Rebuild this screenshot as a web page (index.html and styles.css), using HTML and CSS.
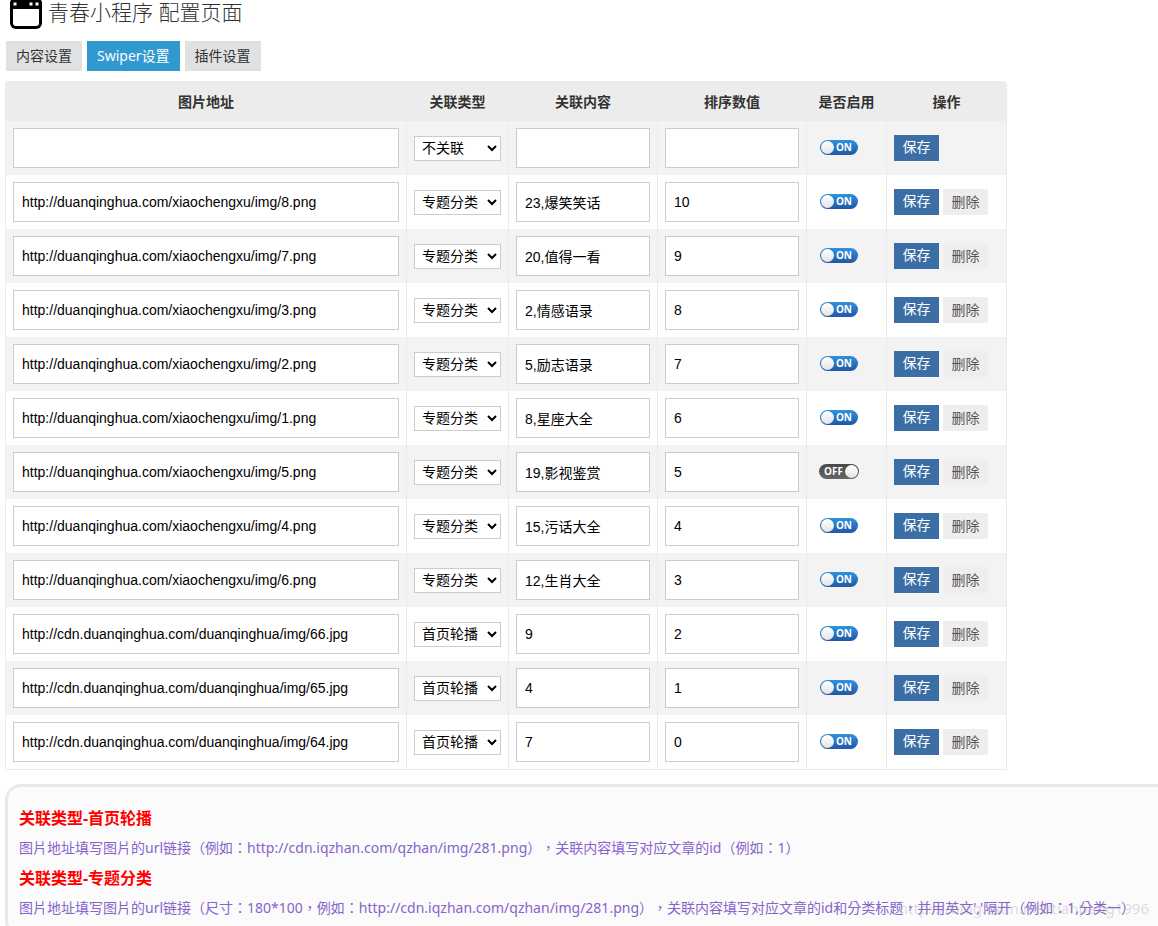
FILE: index.html
```html
<!DOCTYPE html>
<html lang="zh-CN">
<head>
<meta charset="utf-8">
<title>青春小程序 配置页面</title>
<link rel="stylesheet" href="styles.css">
</head>
<body>
<header class="page-head">
<svg class="logo" viewBox="0 0 32 29" aria-hidden="true"><path d="M1 0h30l1 2v21a6 6 0 0 1-6 6H6a6 6 0 0 1-6-6V2z"/><path class="logo-pane" d="M3 9h26v14a3 3 0 0 1-3 3H6a3 3 0 0 1-3-3z"/><path class="logo-pane" d="M3.500 2.500h3v3h-3zM19.500 2.500h3v3h-3zM25.500 2.500h3v3h-3z"/></svg>
<h1 class="title">青春小程序 配置页面</h1>
</header>
<nav class="tabs">
<a class="tab" href="#content">内容设置</a>
<a class="tab tab-active" href="#swiper">Swiper设置</a>
<a class="tab" href="#plugin">插件设置</a>
</nav>
<table class="grid">
<colgroup><col class="col-url"><col class="col-type"><col class="col-text"><col class="col-text"><col class="col-on"><col class="col-act"></colgroup>
<thead><tr><th>图片地址</th><th>关联类型</th><th>关联内容</th><th>排序数值</th><th>是否启用</th><th>操作</th></tr></thead>
<tbody id="rows"></tbody>
</table>
<section class="note">
<h2 class="note-title">关联类型-首页轮播</h2>
<p class="note-text">图片地址填写图片的url链接（例如：http://cdn.iqzhan.com/qzhan/img/281.png），关联内容填写对应文章的id（例如：1）</p>
<h2 class="note-title">关联类型-专题分类</h2>
<p class="note-text">图片地址填写图片的url链接（尺寸：180*100，例如：http://cdn.iqzhan.com/qzhan/img/281.png），关联内容填写对应文章的id和分类标题，并用英文','隔开（例如：1,分类一）</p>
</section>
<div class="watermark">https://blog.csdn.net/tianpang1996</div>
<script src="rows.js"></script>
</body>
</html>
```
FILE: styles.css
```css
* { box-sizing: border-box; }
body {
  margin: 0;
  padding: 0 0 20px 5px;
  overflow-x: hidden;
  background: #fff;
  color: #333;
  font: 14px/20px "Noto Sans", "Noto Sans CJK SC", sans-serif;
}
.page-head { display: flex; align-items: flex-start; gap: 6px; height: 41px; padding-left: 5px; }
.logo { width: 32px; height: 29px; flex: none; }
.logo-pane { fill: #fff; }
.title { margin: 0; font-size: 21px; line-height: 24px; font-weight: 300; }
.tabs { display: flex; gap: 5px; padding-left: 1px; margin-bottom: 10px; }
.tab { padding: 5px 10px; background: #dfe1e2; color: #333; text-decoration: none; }
.tab-active { background: #3199cf; color: #fff; }
.grid {
  width: 1002px;
  max-width: 100%;
  table-layout: fixed;
  border-collapse: separate;
  border-spacing: 0;
  border: solid #ebebeb;
  border-width: 0 1px 1px 0;
  border-radius: 4px 4px 2px 2px;
  overflow: hidden;
}
.col-url { width: 401px; }
.col-type { width: 102px; }
.col-text { width: 149px; }
.col-on { width: 80px; }
.col-act { width: 120px; }
.grid th { height: 40px; padding: 2px 0 0; background: #ececec; font-weight: 700; border-left: 1px solid #ebebeb; }
.grid td { height: 54px; padding: 7px; border-left: 1px solid #ebebeb; vertical-align: middle; }
.grid tbody tr:nth-child(odd) { background: #f3f3f3; }
.field {
  display: block;
  width: 100%;
  height: 40px;
  padding: 0 8px;
  border: 1px solid #ccc;
  border-radius: 0;
  background: #fff;
  color: #000;
  font: 14px "Liberation Sans", "Noto Sans CJK SC", sans-serif;
}
.pick {
  display: block;
  width: 100%;
  height: 25px;
  padding: 0 0 0 3px;
  border: 1px solid #ccc;
  border-radius: 0;
  background: #fff;
  color: #000;
  font: 14px "Liberation Sans", "Noto Sans CJK SC", sans-serif;
}
.switch {
  appearance: none;
  display: flex;
  align-items: center;
  justify-content: space-between;
  width: 38px;
  height: 15px;
  margin: 0 0 2px 6px;
  padding: 0 6px 0 1px;
  border-radius: 8px;
  background: linear-gradient(#3092dc, #2257a8);
  color: #fff;
  font: 700 10px/15px "Open Sans", sans-serif;
}
.switch::before { content: ""; width: 13px; height: 13px; border-radius: 50%; background: linear-gradient(#fff, #e4e4e4); }
.switch::after { content: "ON"; }
.switch:not(:checked) { flex-direction: row-reverse; width: 40px; margin-left: 5px; padding: 0 1px 0 5px; background: linear-gradient(#484848, #666); }
.switch:not(:checked)::after { content: "OFF"; }
.actions { display: flex; gap: 4px; }
.btn { width: 45px; height: 26px; padding: 0 0 2px; border: 0; background: #3a6ea5; color: #fff; font: inherit; }
.btn-plain { padding: 0; background: #eee; color: #555; }
.note {
  margin-top: 14px;
  padding: 19px 0 8px 11px;
  border: 3px solid #ede8e8;
  border-right: 0;
  border-radius: 16px 0 0 16px;
  background: #fbfbfb;
  white-space: nowrap;
}
.note-title { margin: 0; color: #f00; font-size: 16px; line-height: 24px; font-weight: 700; }
/* Centred full-width punctuation, each mark keeping its full em */
.note-text {
  margin: 0;
  padding: 6px 0;
  color: #8664cb;
  font-family: "Noto Sans", "Noto Sans CJK TC", sans-serif;
  font-feature-settings: "locl" 0;
  text-spacing-trim: space-all;
  line-height: 24px;
}
.watermark {
  position: absolute;
  top: 898px;
  right: 9px;
  color: rgba(160, 160, 160, 0.35);
  font-size: 15px;
}
```
FILE: rows.js
```js
const base = "http://duanqinghua.com/xiaochengxu/img/";
const cdn = "http://cdn.duanqinghua.com/duanqinghua/img/";
const rows = [
  ["", "不关联", "", "", true],
  [base + "8.png", "专题分类", "23,爆笑笑话", "10", true],
  [base + "7.png", "专题分类", "20,值得一看", "9", true],
  [base + "3.png", "专题分类", "2,情感语录", "8", true],
  [base + "2.png", "专题分类", "5,励志语录", "7", true],
  [base + "1.png", "专题分类", "8,星座大全", "6", true],
  [base + "5.png", "专题分类", "19,影视鉴赏", "5", false],
  [base + "4.png", "专题分类", "15,污话大全", "4", true],
  [base + "6.png", "专题分类", "12,生肖大全", "3", true],
  [cdn + "66.jpg", "首页轮播", "9", "2", true],
  [cdn + "65.jpg", "首页轮播", "4", "1", true],
  [cdn + "64.jpg", "首页轮播", "7", "0", true]
];
const types = ["不关联", "首页轮播", "专题分类"];
document.getElementById("rows").innerHTML = rows.map(([url, type, content, order, on], i) => `<tr>
<td><input class="field" type="text" aria-label="图片地址" value="${url}"></td>
<td><select class="pick" aria-label="关联类型">${types.map(t => `<option${t === type ? " selected" : ""}>${t}</option>`).join("")}</select></td>
<td><input class="field" type="text" aria-label="关联内容" value="${content}"></td>
<td><input class="field" type="text" aria-label="排序数值" value="${order}"></td>
<td><input class="switch" type="checkbox" aria-label="是否启用"${on ? " checked" : ""}></td>
<td><div class="actions"><button class="btn" type="button">保存</button>${i ? '<button class="btn btn-plain" type="button">删除</button>' : ""}</div></td>
</tr>`).join("");
```
